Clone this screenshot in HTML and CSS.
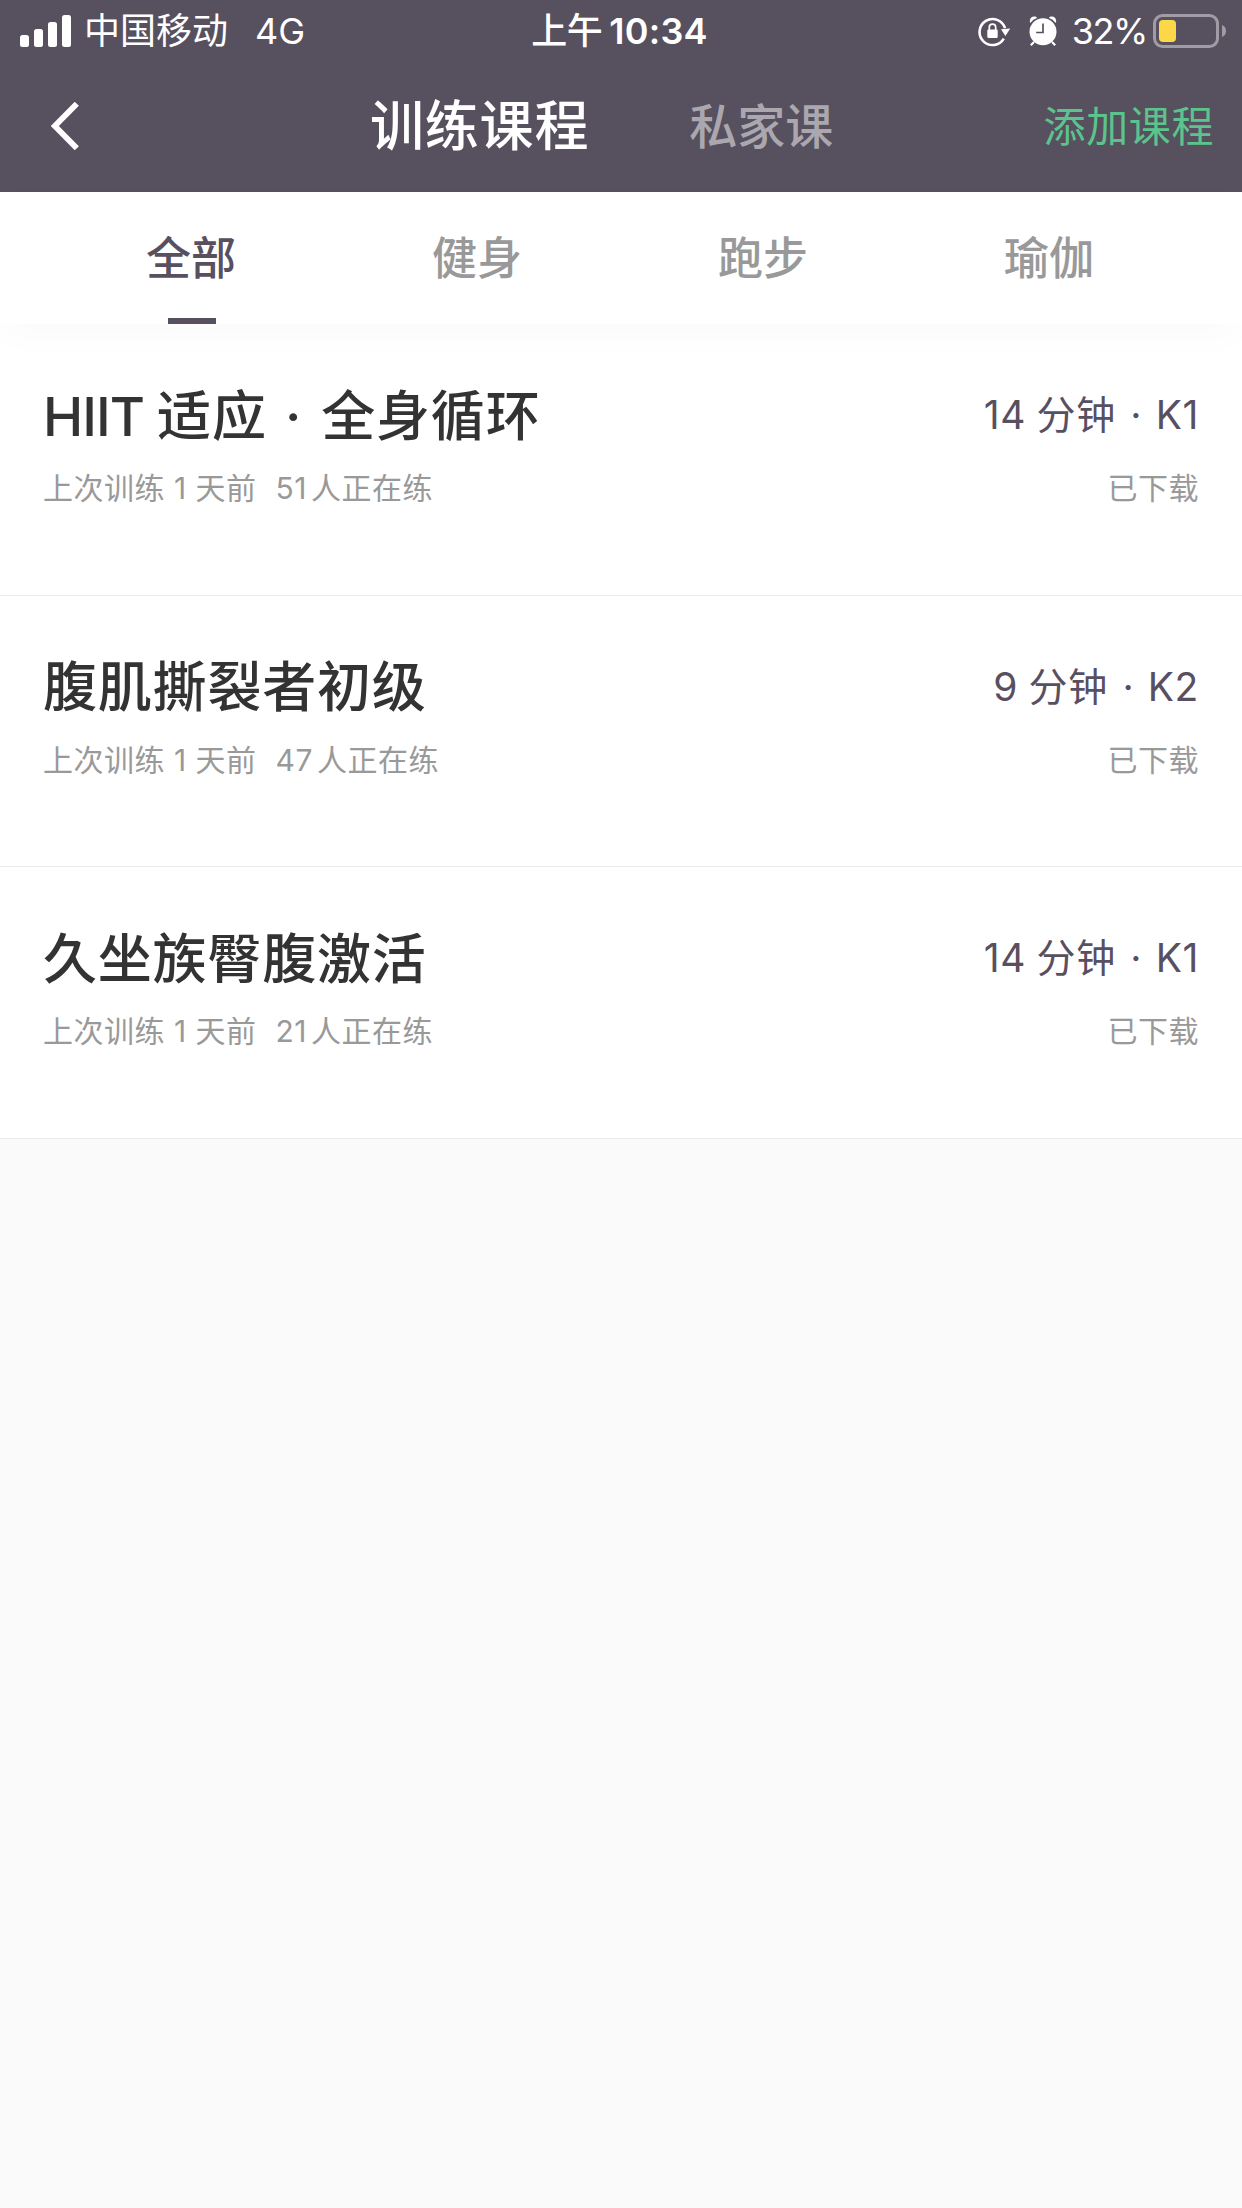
FILE: index.html
```html
<!DOCTYPE html>
<html lang="zh-CN">
<head>
  <meta charset="UTF-8" />
  <meta name="viewport" content="width=device-width, initial-scale=1.0"/>
  <title>训练课程</title>
  <link rel="stylesheet" href="styles.css">
</head>
<body>
  <header>
    <div class="status-bar">
      <div class="status-left">
        <svg class="signal" width="51" height="32" viewBox="0 0 51 32" fill="#fff">
          <rect x="0" y="20" width="9" height="12" rx="2.5"/>
          <rect x="14" y="14" width="9" height="18" rx="2.5"/>
          <rect x="28" y="7" width="9" height="25" rx="2.5"/>
          <rect x="42" y="0" width="9" height="32" rx="2.5"/>
        </svg>
        <span class="carrier">中国移动</span>
        <span class="network">4G</span>
      </div>
      <div class="status-time"><span class="ampm">上午</span><span class="clock">10:34</span></div>
      <div class="status-right">
        <svg class="lock" width="33" height="30" viewBox="0 0 33 30">
          <path d="M25.800 21.600A13 13 0 1 1 27 11.200" fill="none" stroke="#fff" stroke-width="2.6"/>
          <path d="M23 12.200l9.200-.8L27.400 19z" fill="#fff"/>
          <rect x="9.3" y="12.600" width="10.4" height="8.4" rx="1.2" fill="#fff"/>
          <path d="M11.3 13.200v-2.900a3.2 3.2 0 0 1 6.4 0v2.9" fill="none" stroke="#fff" stroke-width="1.7"/>
        </svg>
        <svg class="alarm" width="28" height="30" viewBox="0 0 28 30">
          <circle cx="14" cy="15.800" r="13.5" fill="#fff"/>
          <path d="M1 6.400C.1 3 3 -.6 7.400 1L8 2Q4 3.400 1.600 6.700zM27 6.400C27.900 3 25 -.6 20.600 1L20 2q4 1.400 6.400 4.700z" fill="#fff"/>
          <path d="M5 26l-3.200 3.200M23 26l3.200 3.200" stroke="#fff" stroke-width="2.200"/>
          <path d="M14 7.500v9H7.200" fill="none" stroke="#57505f" stroke-width="1.700"/>
        </svg>
        <span class="percent">32%</span>
        <svg class="battery" width="73" height="34" viewBox="0 0 73 34">
          <rect x="1.500" y="1.500" width="63" height="31" rx="8" fill="none" stroke="#a09ba4" stroke-width="3"/>
          <rect x="6" y="6" width="17" height="22" rx="4" fill="#fad847"/>
          <path d="M69 11q4 1.500 4 6t-4 6z" fill="#a09ba4"/>
        </svg>
      </div>
    </div>
    <nav class="nav-bar">
      <svg class="back" width="28" height="48" viewBox="0 0 28 48">
        <path d="M25.800 1.800L3.800 24l22 22.200" fill="none" stroke="#fff" stroke-width="5.800"/>
      </svg>
      <div class="nav-title active">训练课程</div>
      <div class="nav-title">私家课</div>
      <div class="add">添加课程</div>
    </nav>
  </header>
  <div class="tabs">
    <div class="tab active">全部</div>
    <div class="tab">健身</div>
    <div class="tab">跑步</div>
    <div class="tab">瑜伽</div>
  </div>
  <main>
    <div class="course">
      <div class="line">
        <h2><span class="latin">HIIT</span> 适应 <span class="dot">·</span> 全身循环</h2>
        <div class="info">14 分钟 <span class="dot">·</span> K1</div>
      </div>
      <div class="line small">
        <div class="last">上次训练 1 天前</div>
        <div class="people">51<span>人正在练</span></div>
        <div class="state">已下载</div>
      </div>
    </div>
    <div class="course">
      <div class="line">
        <h2>腹肌撕裂者初级</h2>
        <div class="info">9 分钟 <span class="dot">·</span> K2</div>
      </div>
      <div class="line small">
        <div class="last">上次训练 1 天前</div>
        <div class="people">47<span>人正在练</span></div>
        <div class="state">已下载</div>
      </div>
    </div>
    <div class="course">
      <div class="line">
        <h2>久坐族臀腹激活</h2>
        <div class="info">14 分钟 <span class="dot">·</span> K1</div>
      </div>
      <div class="line small">
        <div class="last">上次训练 1 天前</div>
        <div class="people">21<span>人正在练</span></div>
        <div class="state">已下载</div>
      </div>
    </div>
  </main>
</body>
</html>
```
FILE: styles.css
```css
:root {
  --bg: #fafafa;
  --header-bg: #57505f;
  --purple: #584f60;
  --green: #5bc48c;
  --gray: #999;
  --text: #333;
}
* {
  box-sizing: border-box;
}
body {
  margin: 0;
  min-height: 2208px;
  background: var(--bg);
  color: var(--text);
  font-family: Inter, "Noto Sans CJK SC", sans-serif;
  white-space: nowrap;
}
header {
  height: 192px;
  background: var(--header-bg);
  color: #fff;
}
.status-bar {
  display: grid;
  grid-template-columns: 1fr auto 1fr;
  height: 60px;
  padding: 0 16px 0 20px;
  font-size: 36px;
  line-height: 60px;
}
.status-left, .status-right, .status-time {
  display: flex;
  align-items: center;
}
.status-right {
  justify-content: flex-end;
}
.carrier, .network, .percent, .status-time {
  padding-top: 1px;
}
.carrier {
  margin-left: 13px;
}
.network {
  margin-left: 27px;
}
.status-time {
  padding-right: 7px;
  font-weight: 500;
}
.ampm {
  letter-spacing: -0.5px;
}
.clock {
  margin-left: 7px;
  font-weight: 600;
  letter-spacing: 0.2px;
}
.lock {
  margin-top: 2px;
}
.alarm {
  margin: 0 15px 0 18px;
}
.percent {
  letter-spacing: -1.4px;
}
.battery {
  margin: 0 0 0 6px;
}
.nav-bar {
  display: flex;
  align-items: center;
  height: 132px;
  padding: 0 28px 0 51px;
}
.back {
  margin-right: 291px;
}
.nav-title {
  padding-bottom: 6px;
  font-size: 48px;
  font-weight: 500;
  color: #aba7af;
}
.nav-title.active {
  margin-right: 100px;
  padding-bottom: 7px;
  font-size: 54px;
  letter-spacing: 0.8px;
  color: #fff;
}
.add {
  margin-left: auto;
  padding-bottom: 5px;
  font-size: 42px;
  letter-spacing: 0.6px;
  color: var(--green);
}
.tabs {
  position: relative;
  display: flex;
  height: 132px;
  padding: 0 50px 0 48px;
  background: #fff;
  box-shadow: 0 12px 36px rgba(0,0,0,0.02);
}
.tab {
  display: flex;
  flex: 1;
  flex-direction: column;
  align-items: center;
  height: 132px;
  font-size: 45px;
  font-weight: 500;
  line-height: 134px;
  color: var(--gray);
}
.tab.active {
  color: var(--purple);
}
.tab.active::after {
  content: "";
  width: 48px;
  height: 6px;
  margin: -8px 0 0 2px;
  background: var(--purple);
}
.course {
  height: 271.66px;
  padding: 48px 43px 0;
  background: #fff;
  border-bottom: 1px solid #ebebeb;
}
.line {
  display: flex;
  align-items: center;
  height: 80px;
}
h2 {
  margin: 0;
  font-size: 54px;
  font-weight: 500;
  letter-spacing: 0.8px;
}
.latin {
  margin: 0 -2px 0 0;
  letter-spacing: -1px;
}
.dot {
  margin: 0 4px 0 3px;
}
.info {
  margin-left: auto;
  font-size: 39px;
  letter-spacing: 0.6px;
  word-spacing: -1px;
  color: var(--purple);
}
.info .dot {
  margin: 0 3px 0 4px;
}
.small {
  height: 68px;
  font-size: 30px;
  letter-spacing: 0.5px;
  color: var(--gray);
}
.people {
  margin-left: 19px;
}
.people span {
  margin-left: 4px;
}
.state {
  margin-left: auto;
}
```
